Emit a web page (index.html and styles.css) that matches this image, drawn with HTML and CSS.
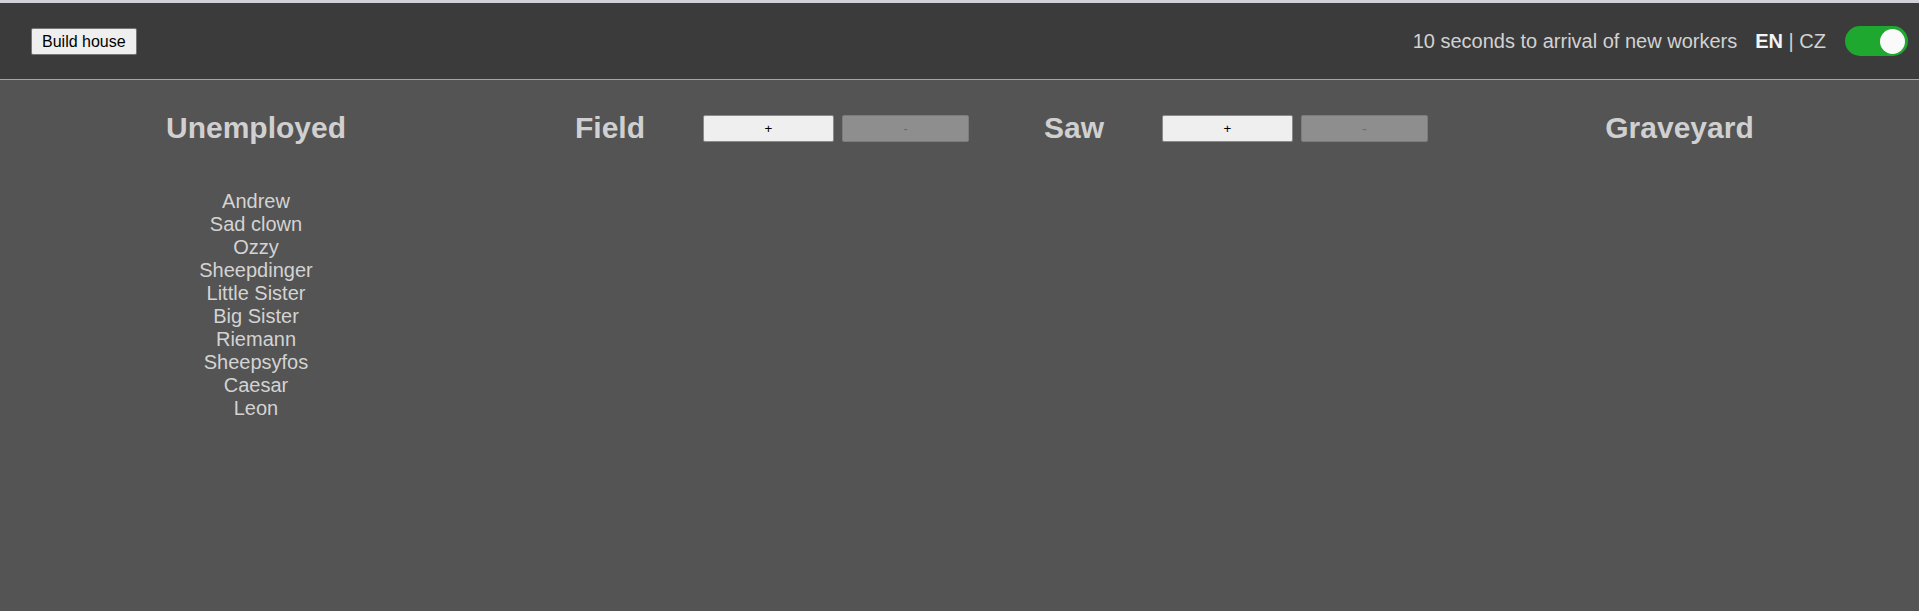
FILE: index.html
```html
<!DOCTYPE html>
<html lang="en">
<head>
<meta charset="utf-8">
<title>Workers</title>
<link rel="stylesheet" href="styles.css">
</head>
<body>
<header class="topbar">
  <button class="btn-build" type="button">Build house</button>
  <div class="topbar-right">
    <span class="timer">10 seconds to arrival of new workers</span>
    <span class="lang"><b class="lang-active">EN</b> | CZ</span>
    <span class="toggle"><span class="knob"></span></span>
  </div>
</header>
<main class="board">
  <section class="col col-unemployed">
    <div class="col-head"><h2 class="col-title">Unemployed</h2></div>
    <ul class="names">
      <li>Andrew</li>
      <li>Sad clown</li>
      <li>Ozzy</li>
      <li>Sheepdinger</li>
      <li>Little Sister</li>
      <li>Big Sister</li>
      <li>Riemann</li>
      <li>Sheepsyfos</li>
      <li>Caesar</li>
      <li>Leon</li>
    </ul>
  </section>
  <section class="col col-field">
    <div class="col-head">
      <h2 class="col-title">Field</h2>
      <div class="ctrls">
        <button class="btn-plus" type="button">+</button>
        <button class="btn-minus" type="button" disabled>-</button>
      </div>
    </div>
  </section>
  <section class="col col-saw">
    <div class="col-head">
      <h2 class="col-title">Saw</h2>
      <div class="ctrls">
        <button class="btn-plus" type="button">+</button>
        <button class="btn-minus" type="button" disabled>-</button>
      </div>
    </div>
  </section>
  <section class="col col-grave">
    <div class="col-head"><h2 class="col-title">Graveyard</h2></div>
  </section>
</main>
</body>
</html>
```
FILE: styles.css
```css
html, body {
  margin: 0;
  padding: 0;
}
body {
  background: #545454;
  min-height: 611px;
  font-family: "Liberation Sans", Arial, sans-serif;
  color: #d0d0d0;
}
.topbar {
  box-sizing: border-box;
  height: 80px;
  border-top: 3px solid #d2d2d6;
  border-bottom: 1px solid #a6a6a6;
  background: #3b3b3b;
  display: flex;
  align-items: center;
  justify-content: space-between;
  padding: 0 11px 0 31px;
}
.btn-build {
  font-family: "Liberation Sans", Arial, sans-serif;
  font-size: 16px;
  line-height: 17px;
  padding: 4px 10px;
  background: #efefef;
  color: #000;
  border: 1px solid #767676;
  border-radius: 2px;
}
.topbar-right {
  display: flex;
  align-items: center;
  gap: 19px;
  font-size: 20px;
}
.timer {
  color: #d2d2d2;
  margin-right: -1px;
}
.lang {
  color: #d2d2d2;
}
.lang-active {
  color: #f4f4f4;
}
.toggle {
  box-sizing: border-box;
  width: 63px;
  height: 30px;
  border-radius: 15px;
  background: #1fa82f;
  display: flex;
  align-items: center;
  justify-content: flex-end;
  padding: 0 3px;
}
.knob {
  width: 25px;
  height: 25px;
  border-radius: 50%;
  background: #fafafa;
}
.board {
  display: grid;
  grid-template-columns: 512px 520px 408px 1fr;
  padding-top: 31px;
}
.col {
  display: flex;
  flex-direction: column;
  align-items: center;
}
.col-head {
  display: flex;
  align-items: center;
  gap: 58px;
}
.col-title {
  margin: 0;
  font-size: 30px;
  font-weight: bold;
  line-height: 34.5px;
  color: #d0d0d0;
}
.ctrls {
  display: flex;
  gap: 8px;
}
.ctrls button {
  box-sizing: border-box;
  height: 27px;
  font-family: "Liberation Sans", Arial, sans-serif;
  font-size: 13.33px;
  padding: 0;
  border-radius: 2px;
}
.btn-plus {
  width: 131px;
  background: #efefef;
  color: #000;
  border: 1px solid #8a8a8a;
}
.btn-minus {
  width: 127px;
  background: #8e8e8e;
  color: #6a6a6a;
  border: 1px solid #7c7c7c;
}
.names {
  list-style: none;
  margin: 44px 0 0;
  padding: 0;
  text-align: center;
  font-size: 20px;
  line-height: 23px;
  color: #d3d3d3;
}
```
